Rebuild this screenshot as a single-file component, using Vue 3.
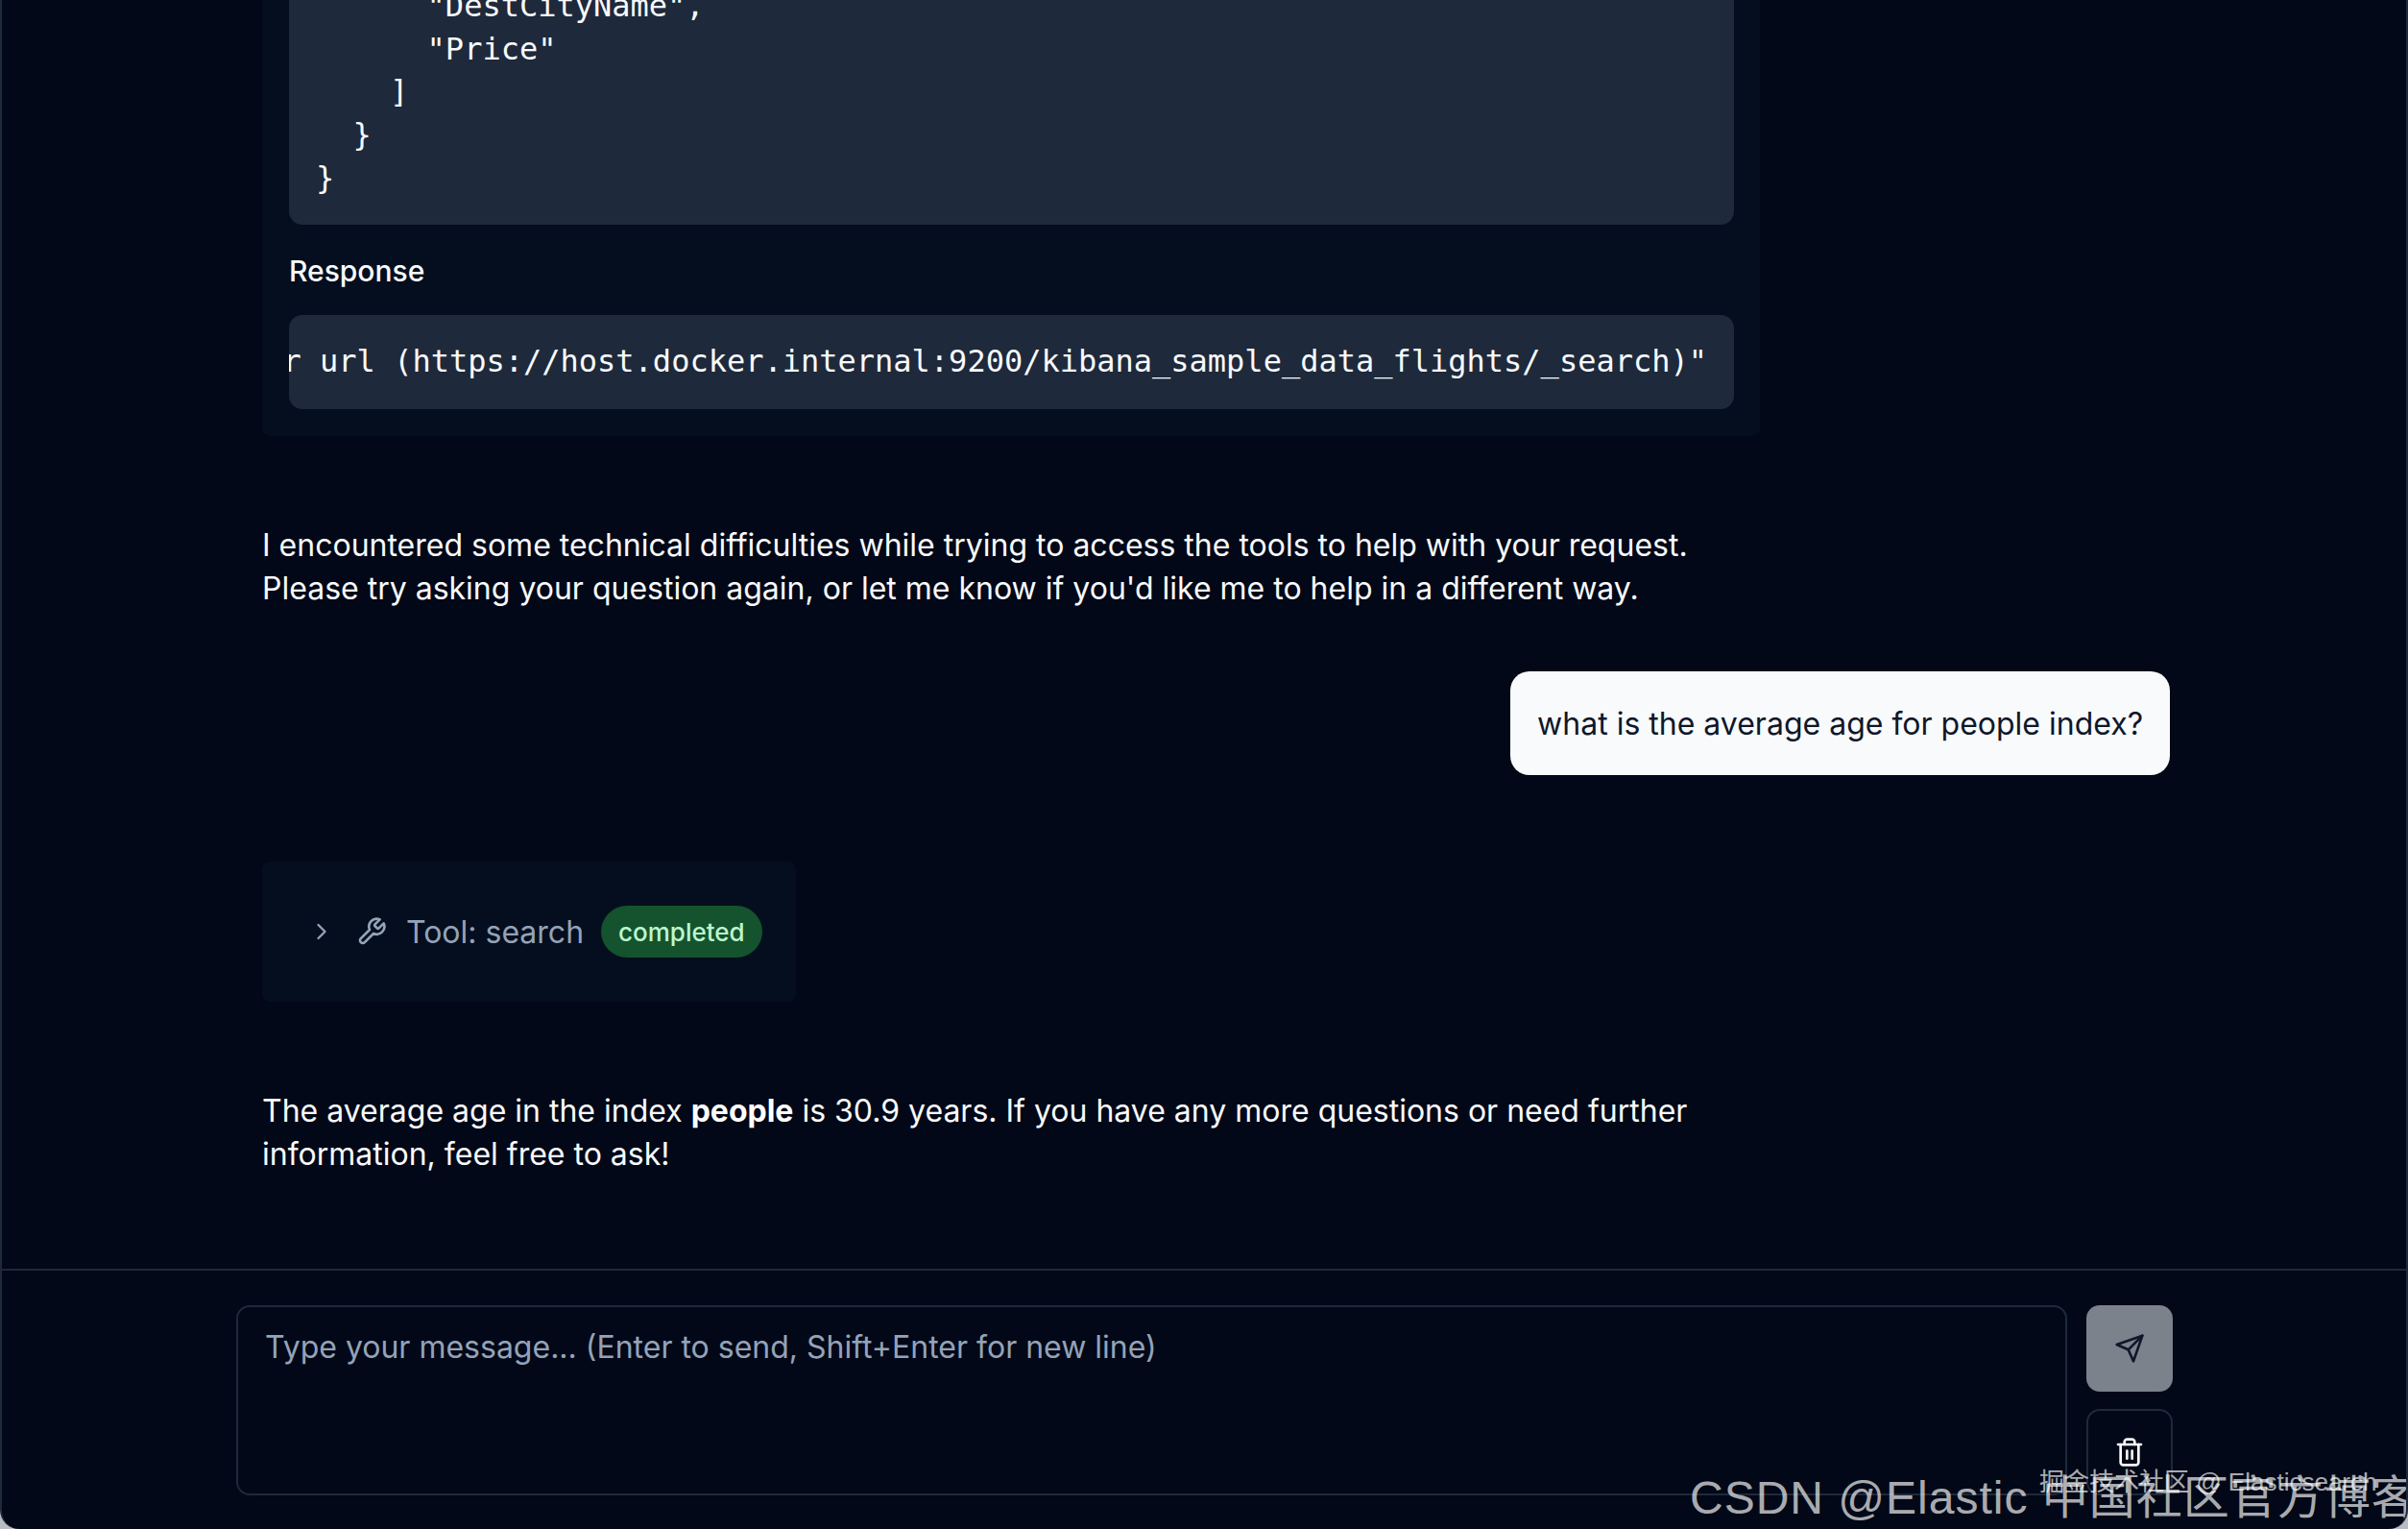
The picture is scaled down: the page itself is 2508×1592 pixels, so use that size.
<script setup>
const codeTail = ['      "DestCityName",', '      "Price"', '    ]', '  }', '}']
</script>

<template>
  <div class="window">
    <main class="messages">
      <section class="tool-card expanded">
        <pre class="code request"><code><span v-for="line in codeTail" :key="line" class="code-line">{{ line }}</span></code></pre>
        <h4 class="label">Response</h4>
        <div class="code response"><span class="response-text">or url (https://host.docker.internal:9200/kibana_sample_data_flights/_search)"</span></div>
      </section>

      <p class="assistant first">I encountered some technical difficulties while trying to access the tools to help with your request. Please try asking your question again, or let me know if you'd like me to help in a different way.</p>

      <div class="user-row">
        <div class="bubble">what is the average age for people index?</div>
      </div>

      <section class="tool-card collapsed">
        <svg class="chev" viewBox="0 0 24 24"><path d="m9 18 6-6-6-6" /></svg>
        <svg class="wrench" viewBox="0 0 24 24"><path d="M14.7 6.3a1 1 0 0 0 0 1.4l1.6 1.6a1 1 0 0 0 1.4 0l3.77-3.77a6 6 0 0 1-7.94 7.94l-6.91 6.91a2.12 2.12 0 0 1-3-3l6.91-6.91a6 6 0 0 1 7.94-7.94l-3.76 3.76z" /></svg>
        <span class="tool-name">Tool: search</span>
        <span class="badge">completed</span>
      </section>

      <p class="assistant last">The average age in the index <strong>people</strong> is 30.9 years. If you have any more questions or need further information, feel free to ask!</p>
    </main>

    <footer class="composer">
      <div class="input">Type your message... (Enter to send, Shift+Enter for new line)</div>
      <div class="actions">
        <button class="btn send" type="button" aria-label="Send">
          <svg viewBox="0 0 24 24"><path d="m22 2-7 20-4-9-9-4Z" /><path d="M22 2 11 13" /></svg>
        </button>
        <button class="btn trash" type="button" aria-label="Clear">
          <svg viewBox="0 0 24 24"><path d="M3 6h18" /><path d="M19 6v14c0 1-1 2-2 2H7c-1 0-2-1-2-2V6" /><path d="M8 6V4c0-1 1-2 2-2h4c1 0 2 1 2 2v2" /><path d="M10 11v6" /><path d="M14 11v6" /></svg>
        </button>
      </div>
    </footer>

    <div class="wm wm-large">CSDN @Elastic 中国社区官方博客</div>
    <div class="wm wm-small">掘金技术社区 @ Elasticsearch</div>
  </div>
</template>

<style>
html, body { margin: 0; background: #b9bcc0; }
</style>

<style scoped>
.window {
  position: relative;
  box-sizing: border-box;
  width: 2508px;
  height: 1592px;
  overflow: hidden;
  display: flex;
  flex-direction: column;
  background: #020817;
  border-left: 2px solid #1e293b;
  border-right: 2px solid #1e293b;
  border-radius: 0 0 20px 20px;
  color: #f8fafc;
  font-family: Inter, "Noto Sans CJK SC", sans-serif;
  font-size: 32px;
}
.messages {
  flex: 1;
  min-height: 0;
  overflow: hidden;
  display: flex;
  flex-direction: column;
  justify-content: flex-end;
  padding: 0 246px 0 271px;
}
.tool-card {
  flex: none;
  box-sizing: border-box;
  background: #050e1e;
  border-radius: 8px;
}
.expanded {
  width: 1560px;
  padding: 0 27px 28px 28px;
}
.code {
  margin: 0;
  background: #1e293b;
  border-radius: 14px;
  font-family: "DejaVu Sans Mono", "Liberation Mono", monospace;
  font-size: 32px;
  line-height: 44.8px;
  color: #f8fafc;
}
.request { padding: 0 28px 26px; }
.code-line { display: block; white-space: pre; }
.label {
  margin: 26px 0 24px;
  font-size: 30px;
  line-height: 44px;
  font-weight: 500;
}
.response {
  height: 98px;
  display: flex;
  align-items: center;
  justify-content: flex-end;
  overflow: hidden;
  padding-right: 28px;
  white-space: nowrap;
}
.response-text { flex: none; }
.assistant {
  margin: 0;
  width: 1560px;
  line-height: 44.8px;
  color: #f8fafc;
}
.assistant strong { font-weight: 700; color: #fff; }
.first { margin-top: 92px; }
.user-row {
  display: flex;
  justify-content: flex-end;
  margin-top: 64px;
}
.bubble {
  box-sizing: border-box;
  height: 108px;
  display: flex;
  align-items: center;
  padding: 0 28px;
  background: #f8fafc;
  color: #0f172a;
  border-radius: 20px;
}
.collapsed {
  width: 556px;
  height: 146px;
  margin-top: 90px;
  padding-left: 48px;
  display: flex;
  align-items: center;
}
.chev, .wrench {
  flex: none;
  fill: none;
  stroke: #94a3b8;
  stroke-width: 2;
  stroke-linecap: round;
  stroke-linejoin: round;
}
.chev { width: 28px; height: 28px; }
.wrench { width: 32px; height: 32px; margin-left: 22px; }
.tool-name {
  margin-left: 20px;
  color: #94a3b8;
}
.badge {
  margin-left: 18px;
  height: 54px;
  padding: 0 18px;
  display: flex;
  align-items: center;
  border-radius: 27px;
  background: #14532d;
  color: #bbf7d0;
  font-size: 26px;
  font-weight: 500;
}
.last { margin-top: 92px; margin-bottom: 96px; }
.composer {
  flex: none;
  box-sizing: border-box;
  height: 271px;
  border-top: 2px solid #1e293b;
  padding: 36px 243px 0 244px;
  display: flex;
  gap: 20px;
  align-items: flex-start;
}
.input {
  flex: 1;
  box-sizing: border-box;
  height: 198px;
  padding: 20px 28px;
  border: 2px solid #1e293b;
  border-radius: 14px;
  line-height: 44.8px;
  color: #94a3b8;
}
.actions {
  flex: none;
  display: flex;
  flex-direction: column;
  gap: 18px;
}
.btn {
  width: 90px;
  height: 90px;
  padding: 0;
  display: flex;
  align-items: center;
  justify-content: center;
  border-radius: 14px;
  background: transparent;
}
.btn svg {
  width: 32px;
  height: 32px;
  fill: none;
  stroke-width: 2;
  stroke-linecap: round;
  stroke-linejoin: round;
}
.send { border: none; background: #7c828c; }
.send svg { stroke: #0f172a; }
.trash { border: 2px solid #1e293b; }
.trash svg { stroke: #f8fafc; }
.wm {
  position: absolute;
  white-space: nowrap;
  color: rgba(255, 255, 255, 0.68);
  font-family: "Liberation Sans", "Noto Sans CJK SC", sans-serif;
}
.wm-large { left: 1758px; top: 1520px; font-size: 48px; letter-spacing: 1px; }
.wm-small { left: 2122px; top: 1522px; font-size: 26px; }
</style>
